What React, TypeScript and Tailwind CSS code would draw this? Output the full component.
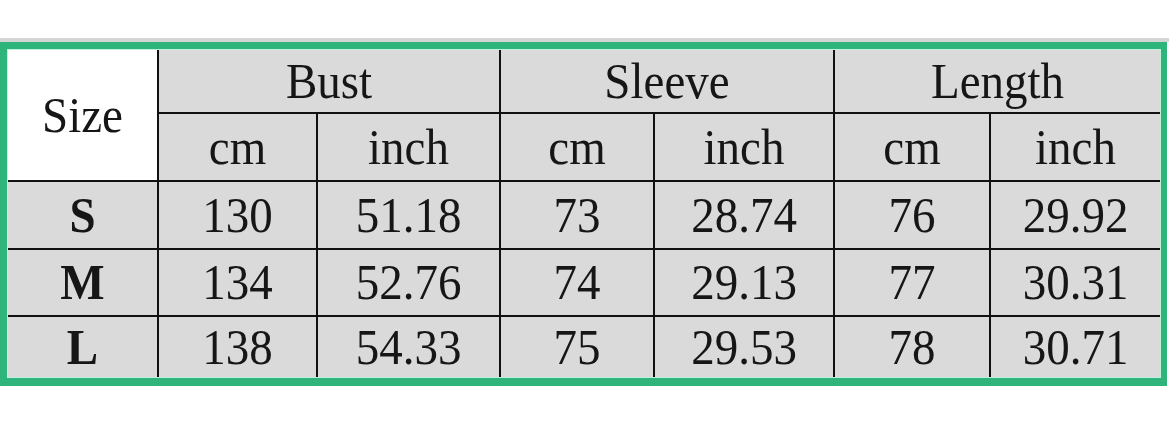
import React from "react";

const font = { fontFamily: '"Liberation Serif", "Times New Roman", serif' };

function Cell({
  children,
  className = "",
  bold = false,
}: {
  children: React.ReactNode;
  className?: string;
  bold?: boolean;
}) {
  return (
    <div
      className={`flex items-center justify-center bg-[#dadada] text-[#161616] text-[47px] leading-none ${
        bold ? "font-bold" : ""
      } ${className}`}
    >
      <span className="inline-block scale-y-[1.08]">{children}</span>
    </div>
  );
}

export default function App() {
  const rows = [
    ["S", "130", "51.18", "73", "28.74", "76", "29.92"],
    ["M", "134", "52.76", "74", "29.13", "77", "30.31"],
    ["L", "138", "54.33", "75", "29.53", "78", "30.71"],
  ];
  return (
    <div className="w-[1169px] h-[426px] bg-white overflow-hidden" style={font}>
      <div className="h-[38px]" />
      <div className="h-[4px] w-[1169px] bg-[#d4d6d5]" />
      <div className="w-[1167px] bg-[#2fb47c] pt-[7px] pl-[7px] pr-[6px] pb-[8px]">
        <div className="border border-[#bff0dc] bg-[#bff0dc]">
          <div className="grid grid-cols-[149px_157px_181px_152px_178px_154px_169px] grid-rows-[62px_66px_66px_65px_60px] gap-[2px] bg-[#111]">
            <div className="row-span-2 flex items-center justify-center bg-white text-[47px] leading-none text-[#161616]">
              <span className="inline-block scale-y-[1.08]">Size</span>
            </div>
            <Cell className="col-span-2">Bust</Cell>
            <Cell className="col-span-2">Sleeve</Cell>
            <Cell className="col-span-2">Length</Cell>
            <Cell>cm</Cell>
            <Cell>inch</Cell>
            <Cell>cm</Cell>
            <Cell>inch</Cell>
            <Cell>cm</Cell>
            <Cell>inch</Cell>
            {rows.map((r) =>
              r.map((v, i) => (
                <Cell key={r[0] + i} bold={i === 0}>
                  {v}
                </Cell>
              ))
            )}
          </div>
        </div>
      </div>
    </div>
  );
}
